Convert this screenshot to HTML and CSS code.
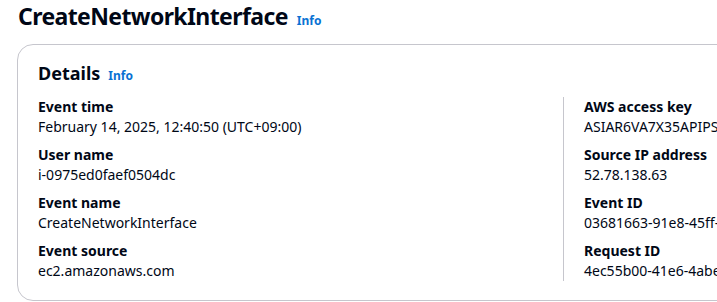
FILE: index.html
```html
<!DOCTYPE html>
<html lang="en">
<head>
    <meta charset="UTF-8">
    <title>CreateNetworkInterface</title>
    <link rel="stylesheet" href="styles.css">
</head>
<body>
    <!-- Page header -->
    <div class="page-header">
        <h1>CreateNetworkInterface</h1>
        <a href="#" class="info-link">Info</a>
    </div>

    <!-- Details container -->
    <div class="card">
        <div class="card-header">
            <h2>Details</h2>
            <a href="#" class="info-link">Info</a>
        </div>
        <div class="columns">
            <div class="column">
                <div class="field">
                    <div class="label">Event time</div>
                    <div class="value">February 14, 2025, 12:40:50 (UTC+09:00)</div>
                </div>
                <div class="field">
                    <div class="label">User name</div>
                    <div class="value">i-0975ed0faef0504dc</div>
                </div>
                <div class="field">
                    <div class="label">Event name</div>
                    <div class="value">CreateNetworkInterface</div>
                </div>
                <div class="field">
                    <div class="label">Event source</div>
                    <div class="value">ec2.amazonaws.com</div>
                </div>
            </div>
            <div class="column">
                <div class="field">
                    <div class="label">AWS access key</div>
                    <div class="value">ASIAR6VA7X35APIPSWQK</div>
                </div>
                <div class="field">
                    <div class="label">Source IP address</div>
                    <div class="value">52.78.138.63</div>
                </div>
                <div class="field">
                    <div class="label">Event ID</div>
                    <div class="value">03681663-91e8-45ff-a1c2-7d0e3b2f9a41</div>
                </div>
                <div class="field">
                    <div class="label">Request ID</div>
                    <div class="value">4ec55b00-41e6-4abe-9c0d-2f6a8e1b7c53</div>
                </div>
            </div>
        </div>
    </div>
</body>
</html>
```

FILE: styles.css
```css
* {
    margin: 0;
    padding: 0;
    box-sizing: border-box;
}
body {
    background-color: #ffffff;
    color: #000716;
    font-family: 'Noto Sans', 'Open Sans', sans-serif;
    font-size: 14px;
    overflow: hidden;
    padding: 0 0 0 17px;
    width: 1200px;
}
.page-header {
    display: flex;
    align-items: baseline;
    gap: 9px;
    height: 44px;
    padding-left: 1px;
}
.page-header h1 {
    font-size: 23px;
    font-weight: 700;
    line-height: 32px;
    letter-spacing: -0.6px;
}
.info-link {
    color: #0972d3;
    font-size: 12px;
    font-weight: 700;
    text-decoration: none;
}
.card {
    border: 1px solid #c6c6cd;
    border-radius: 16px;
    padding: 16px 20px 16px 20px;
    height: 257px;
}
.card-header {
    display: flex;
    align-items: baseline;
    gap: 8px;
    height: 36px;
}
.card-header h2 {
    font-size: 18px;
    font-weight: 700;
    line-height: 24px;
}
.columns {
    display: grid;
    grid-template-columns: 525px 525px;
}
.column {
    display: flex;
    flex-direction: column;
    gap: 8px;
}
.column + .column {
    border-left: 1px solid #c6c6cd;
    padding-left: 20px;
}
.label {
    font-weight: 700;
    line-height: 20px;
}
.value {
    line-height: 20px;
}
```
